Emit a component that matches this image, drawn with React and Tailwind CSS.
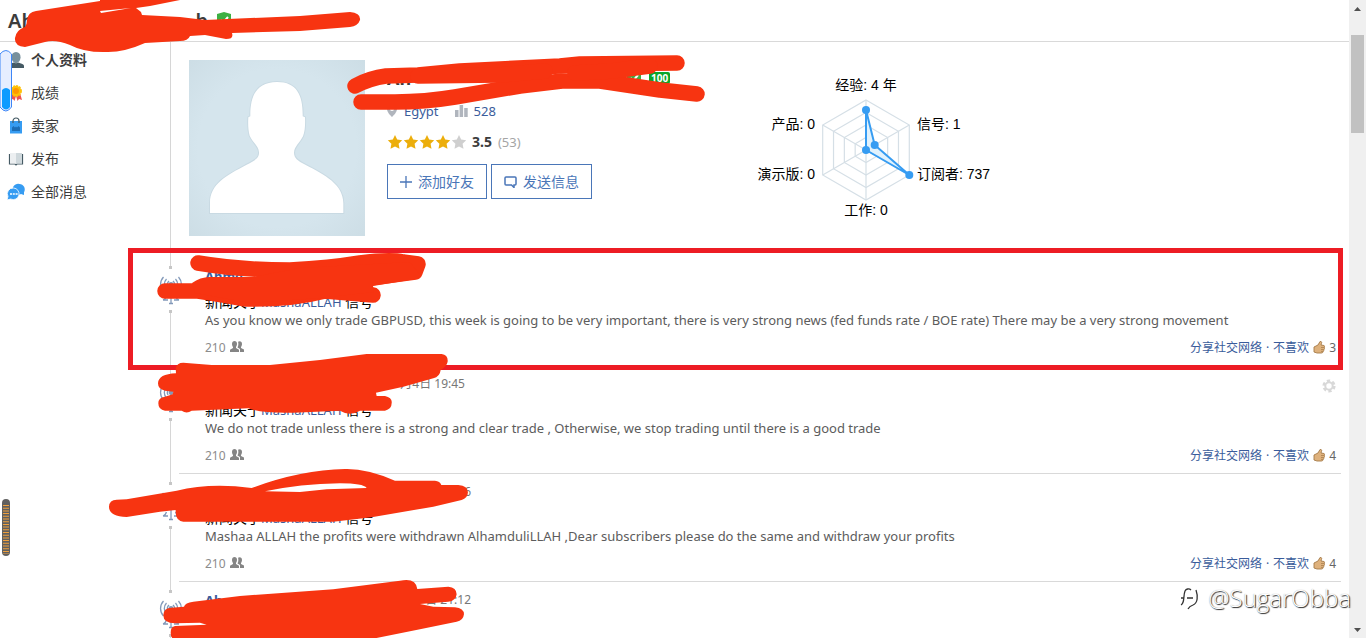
import clsx from "clsx";

const NAV = [
  { label: "个人资料", icon: UserIcon, active: true },
  { label: "成绩", icon: MedalIcon },
  { label: "卖家", icon: BagIcon },
  { label: "发布", icon: BookIcon },
  { label: "全部消息", icon: ChatIcon },
];

const POSTS = [
  {
    id: 1,
    name: "Ahme",
    text: "As you know we only trade GBPUSD, this week is going to be very important, there is very strong news (fed funds rate / BOE rate) There may be a very strong movement",
    likes: 3,
  },
  {
    id: 2,
    date: "月4日 19:45",
    dateClass: "pr-1.5",
    text: "We do not trade unless there is a strong and clear trade , Otherwise, we stop trading until there is a good trade",
    likes: 4,
    gear: true,
  },
  {
    id: 3,
    date: "6",
    text: "Mashaa ALLAH the profits were withdrawn AlhamduliLLAH ,Dear subscribers please do the same and withdraw your profits",
    likes: 4,
  },
  { id: 4, name: "Ah", date: "日 21:12" },
];

function UserIcon() {
  return (
    <svg width="18" height="18" viewBox="0 0 18 18">
      <path d="M9 1c3 0 4.500 2.200 4.500 5.200S11.500 12 9 12 4.500 9.200 4.500 6.200 6 1 9 1Z" fill="#78909c" />
      <path d="M1 17v-2c0-2 3-2.500 6-3.500 1 1 3 1 4 0 3 1 6 1.500 6 3.500v2Z" fill="#455a64" />
    </svg>
  );
}

function MedalIcon() {
  return (
    <svg width="18" height="18" viewBox="0 0 18 18">
      <path d="m5 9-2 7 3-1 1.500 2L9 12l1.500 5 1.500-2 3 1-2-7Z" fill="#ef5350" />
      <circle cx="9" cy="7" r="5.200" fill="#ffc107" stroke="#ffc107" strokeWidth="1.500" strokeDasharray="2 1" />
      <circle cx="9" cy="7" r="3" fill="#ff9800" />
    </svg>
  );
}

function BagIcon() {
  return (
    <svg width="18" height="18" viewBox="0 0 18 18">
      <path d="M3 4h12v12.500H3z" fill="#369cf2" />
      <path d="M6 6V4a3 3 0 0 1 6 0v2" fill="none" stroke="#455a64" strokeWidth="1.200" />
      <path d="M5 14v-3.500L6.500 9 8 10.500 9 9.500l1 1L11.500 9l1.500 1.500V14Z" fill="#1d6db5" />
    </svg>
  );
}

function BookIcon() {
  return (
    <svg width="18" height="18" viewBox="0 0 18 18">
      <path d="M2.500 4v10H8l1 1 1-1h5.500V4" fill="none" stroke="#455a64" strokeWidth="1.200" />
      <path d="M3 3h6v10.500H3z" fill="#eceff1" />
      <path d="M9 3h6v10.500H9z" fill="#cfd8dc" />
    </svg>
  );
}

function ChatIcon() {
  return (
    <svg width="18" height="18" viewBox="0 0 18 18">
      <path d="M12.500 1a5.500 5.500 0 0 1 4.500 8.300V12l-3-1A5.500 5.500 0 1 1 12.500 1Z" fill="#369cf2" />
      <path d="M6.500 5a5.800 5.800 0 1 1-2.800 11L0 17l1-3.500A5.800 5.800 0 0 1 6.500 5Z" fill="#369cf2" stroke="#fff" strokeWidth=".8" />
      <path d="M3 10.200h2v1.600H3zM5.800 10.200h2v1.600h-2zM8.600 10.200h2v1.600h-2z" fill="#fff" />
    </svg>
  );
}

function Shield() {
  return (
    <svg width="16" height="17" viewBox="0 0 16 17" className="shrink-0">
      <path d="m8 0 7 2v6c0 4-3 7-7 9-4-2-7-5-7-9V2Z" fill="#3cb043" />
      <path d="m4.500 8 2.500 3 5-6" fill="none" stroke="#fff" strokeWidth="2" />
    </svg>
  );
}

function Star({ on }) {
  return (
    <svg width="16" height="16" viewBox="0 0 16 16">
      <path d="m8 1 2.200 4.600 5 .7-3.600 3.500.9 5L8 12.400l-4.500 2.400.9-5L.8 6.300l5-.7Z" fill={on ? "#ecae0b" : "#cfcfcf"} />
    </svg>
  );
}

function Antenna() {
  return (
    <svg width="24" height="30" viewBox="0 0 24 30" fill="none" stroke="#8299b9" strokeWidth="1.300">
      <path d="M4.500 2a11 11 0 0 0 0 15M19.500 2a11 11 0 0 1 0 15M7.500 4a8 8 0 0 0 0 11M16.500 4a8 8 0 0 1 0 11M10 6a5 5 0 0 0-1 6M14 6a5 5 0 0 1 1 6" />
      <circle cx="12" cy="9.500" r="1.800" fill="#8299b9" />
      <path d="M12 11v18M4 25c2-1 3-2 3.500-4M20 25c-2-1-3-2-3.500-4M4 25h5M15 25h5M10 28.500h4" />
    </svg>
  );
}

function Avatar() {
  return (
    <svg width="176" height="176" viewBox="27 30 528 528" className="shrink-0" role="img" aria-label="avatar">
      <defs>
        <radialGradient id="sky" r="0.75">
          <stop offset="0.6" stopColor="#d5e5ed" />
          <stop offset="1" stopColor="#cbdce4" />
        </radialGradient>
      </defs>
      <path d="M27 30h528v528H27z" fill="url(#sky)" />
      <path
        d="M90 489v-30c0-58 50-83 110-115 30-15 38-22 37-37-1-20-18-28-28-50-5-18-5-38-4-55l6-3c-1-60 18-103 80-103s78 43 77 103l7 3c1 20 0 40-6 57-10 20-26 30-27 49 0 15 10 24 34 36 60 31 115 60 114 117v28Z"
        fill="#fff"
        stroke="#c9dae3"
        strokeWidth="6"
        paintOrder="stroke"
      />
    </svg>
  );
}

function Radar() {
  const rings = [1, 0.75, 0.5, 0.25];
  return (
    <svg width="102" height="107" viewBox="0 0 102 107" className="overflow-visible">
      <g transform="translate(51 56)" fill="none">
        {rings.map((k) => (
          <path key={k} transform={`scale(${k})`} vectorEffect="non-scaling-stroke" d="M0-50 43.300-25V25L0 50-43.300 25V-25Z" stroke="#d5dfe6" strokeWidth="1.200" />
        ))}
        <path d="M0-50V50M-43.300-25 43.300 25M-43.300 25 43.300-25" stroke="#d5dfe6" strokeWidth="1.200" />
        <path d="M0-40 8.700-5 43.300 25 0 0Z" fill="#e1f2fd" stroke="#369cf2" strokeWidth="2" />
        <g fill="#369cf2">
          <circle cy="-40" r="4" />
          <circle cx="8.700" cy="-5" r="4" />
          <circle cx="43.300" cy="25" r="4" />
          <circle r="4" />
        </g>
      </g>
    </svg>
  );
}

function RadarChart() {
  return (
    <div className="mt-4 grid grid-cols-[68px_102px_auto] text-sm leading-[18px] text-black whitespace-nowrap">
      <div className="col-start-2 text-center">经验: 4 年</div>
      <div className="col-start-1 flex flex-col items-end justify-center gap-8 pt-0.5">
        <span>产品: 0</span>
        <span>演示版: 0</span>
      </div>
      <Radar />
      <div className="flex flex-col justify-center gap-8 pt-0.5">
        <span>信号: 1</span>
        <span>订阅者: 737</span>
      </div>
      <div className="col-start-2 text-center">工作: 0</div>
    </div>
  );
}

function ProfileInfo() {
  return (
    <div className="ml-[22px] w-[360px] shrink-0">
      <div className="flex h-9 items-center">
        <h2 className="w-[239px] text-lg leading-9 font-bold text-[#3c3c3c]">Ah</h2>
        <Shield />
        <span className="ml-[7px] rounded-xs bg-[#0ba52b] px-0.5 text-[10px] leading-3 font-bold text-white">100</span>
      </div>
      <div className="flex h-[30px] items-center text-sm text-[#3a5c9b]">
        <svg width="10" height="14" viewBox="0 0 10 14">
          <path fillRule="evenodd" d="M5 0a5 5 0 0 1 5 5c0 3-3 6-5 8-2-2-5-5-5-8a5 5 0 0 1 5-5Zm0 3a2 2 0 1 0 0 4 2 2 0 0 0 0-4Z" fill="#b0b5bd" />
        </svg>
        <a href="#egypt" className="ml-[7px] text-[13px]">Egypt</a>
        <svg width="13" height="12" viewBox="0 0 13 12" className="ml-4" fill="#b0b5bd">
          <path d="M0 5h3.500v7H0zM4.600 0h3.500v12H4.600zM9.200 3h3.500v9H9.200z" />
        </svg>
        <a href="#rating" className="ml-1.5 text-[13px]">528</a>
      </div>
      <div className="flex h-8 items-center text-sm">
        {[1, 2, 3, 4, 5].map((n) => (
          <Star key={n} on={n < 5} />
        ))}
        <b className="ml-[5px] text-[#3c3c3c]">3.5</b>
        <span className="ml-1.5 text-[13px] text-[#a5a5a5]">(53)</span>
      </div>
      <div className="mt-1.5 flex gap-1 text-sm text-[#4a76b8]">
        <button type="button" className="flex h-[35px] items-center gap-1.5 border border-[#4a76b8] px-3 leading-none">
          <svg width="12" height="12" viewBox="0 0 12 12" stroke="#4a76b8" strokeWidth="1.300">
            <path d="M6 0v12M0 6h12" />
          </svg>
          添加好友
        </button>
        <button type="button" className="flex h-[35px] items-center gap-1.5 border border-[#4a76b8] px-3 leading-none">
          <svg width="13" height="12" viewBox="0 0 13 12" fill="none" stroke="#4a76b8" strokeWidth="1.500">
            <path d="M2 1h9q1 0 1 1v6q0 1-1 1h-1v2.500L7.500 9H2Q1 9 1 8V2q0-1 1-1Z" />
          </svg>
          发送信息
        </button>
      </div>
    </div>
  );
}

function Timeline() {
  return (
    <div className="flex w-[31px] shrink-0 flex-col items-center">
      <span className="h-2 w-px bg-[#d6d6d6]" />
      <span className="size-[3px] bg-[#c6c6c6]" />
      <span className="flex h-[41px] items-center">
        <Antenna />
      </span>
      <span className="size-[3px] bg-[#c6c6c6]" />
      <span className="w-px flex-1 bg-[#d6d6d6]" />
    </div>
  );
}

function PostBody({ post }) {
  return (
    <>
      <div className="mt-2 h-[18px] text-sm leading-[18px] text-black">
        新闻关于<a href="#signal" className="text-[13px] text-[#3a5c9b]">MashaALLAH</a> 信号
      </div>
      <p className="h-[18px] text-[13px] leading-[18px] text-[#5c5c5c]">{post.text}</p>
      <div className="mt-2.5 flex h-[18px] items-center text-xs text-[#3a5c9b]">
        <span className="text-[#8c8c8c]">210</span>
        <svg width="14" height="11" viewBox="0 0 14 11" className="mb-1 ml-1" fill="#858585">
          <path d="M4.500 0C6 0 7 1 7 2.800S6.300 5.500 6 6v1l3 1.800V11H0V8.800L3 7V6C2.600 5.500 2 4.500 2 2.800S3 0 4.500 0Z" />
          <path d="M8 .8C10-.5 12 .5 12 3c0 1.500-.6 2.300-1 3v1l3 1.500V11h-4V8L7.500 6.400C8.500 4.500 8.600 2.500 8 .8Z" />
        </svg>
        <a href="#share" className="ml-auto">分享社交网络</a>
        <span className="mx-1">·</span>
        <a href="#unlike">不喜欢</a>
        <svg width="12" height="13" viewBox="0 0 12 13" className="mb-0.5 ml-1">
          <path d="M1 6 5 4l2-3.500c1.500-.3 2 .6 1.500 2L8 4l3 .5c1 .5.8 1.500.4 2 .4.600.2 1.500-.4 2 .2.900-.2 1.500-.8 1.800 0 1-.7 1.700-2 1.700H4L1 11Z" fill="#deb17c" stroke="#a57a48" strokeWidth=".9" />
          <path d="M8 6.500h3M8 8.500h2.700M8 10.400h2" stroke="#a57a48" strokeWidth=".7" />
        </svg>
        <span className="ml-1 text-[#666]">{post.likes}</span>
      </div>
    </>
  );
}

function Post({ post }) {
  return (
    <article className="flex min-h-[108px]">
      <Timeline />
      <div className="-ml-[7px] flex-1 border-b border-[#d9d9d9] pt-[9px] pr-[5px] pb-2 pl-[26px]">
        <div className="flex h-[18px] items-center justify-between text-xs leading-[18px] text-[#777]">
          <div className={clsx("flex w-[266px] justify-between", post.dateClass)}>
            <a href="#author" className="text-[13px] font-bold text-[#3a5c9b]">{post.name}</a>
            <span>{post.date}</span>
          </div>
          {post.gear && (
            <button type="button" aria-label="设置" className="mt-1">
              <svg width="14" height="14" viewBox="0 0 14 14" fill="none" stroke="#d8d8d8">
                <circle cx="7" cy="7" r="5.300" strokeWidth="2.600" strokeDasharray="3.200 2.350" />
                <circle cx="7" cy="7" r="3.700" strokeWidth="2" />
              </svg>
            </button>
          )}
        </div>
        {post.text && <PostBody post={post} />}
      </div>
    </article>
  );
}

// red marker strokes over the names
function Marker() {
  return (
    <svg width="720" height="638" viewBox="0 0 720 638" fill="#f73411" className="pointer-events-none absolute top-0 left-0">
      <path d="M27 20Q28 12 36 11L100 1V-4H190L180 0 150 6 136 8 141 12 142 15 180 17 205 20 300 16 350 12Q361 13 360 20 358 26 350 27L300 31 232 33Q234 39 226 39L205 35 190 36Q188 41 180 41L145 43Q125 52 108 52 85 53 70 45 55 39 45 42L25 47Q14 46 15 38 16 30 25 27 27 24 27 20Z" />
      <path d="M100 11 131 8 101 13Z" fill="#fff" />
      <g fill="none" stroke="#f73411" strokeWidth="15.500" strokeLinecap="round" strokeLinejoin="round">
        <path d="M355 86Q370 78 386 76L418 75 460 71 560 66 580 64 677 63" />
        <path d="M361 102H395Q425 102 455 97L520 86 562 81H600L660 90 697 94" />
        <path d="M418 76 500 75 545 71M575 73 612 71 650 66" />
        <path d="M198 263Q240 270 290 270 330 268 360 263 390 259 403 262L418 264 415 272 370 278" />
        <path d="M165 291H198Q225 295 245 299 290 300 325 291L373 295" />
      </g>
      <path d="M192 283Q200 277 210 277L252 277 300 268 410 262 420 275 416 279 373 286 374 292 320 298 250 303 195 293Z" />
      <g transform="translate(120 240) scale(.3333)">
        <path d="M167 385Q170 368 190 368L275 375H450L600 360 740 342H965Q985 345 983 365 980 380 962 390 960 410 940 415L850 440 768 458 770 468H795Q818 473 815 490 815 508 795 512H720Q690 530 660 512L520 518Q420 520 385 505L215 512Q200 523 185 512H135Q115 510 115 490 115 472 135 470L158 463 160 455 135 452Q114 448 114 430 115 402 168 400Z" />
      </g>
      <g transform="translate(100 460) scale(.3333)">
        <path
          fillRule="evenodd"
          d="M27 140Q28 119 50 119L80 118 230 92Q330 68 455 84 600 30 735 27 800 25 885 62H1005Q1020 63 1024 75H1075Q1104 77 1104 97 1103 115 1085 120L1000 140 815 172 700 185H250Q225 182 227 150L180 155 80 171Q27 170 27 140ZM495 94Q600 72 720 70 790 70 800 84L680 88 600 96Z"
        />
        <path d="M252 440Q255 428 280 425L420 408 700 388 900 362Q948 352 952 387L1045 380Q1070 382 1070 403 1068 423 1045 425L960 432 1000 440 1065 442Q1092 445 1092 463 1090 482 1070 485L960 508 800 540H225Q212 535 212 518 212 500 225 498L320 494 300 488 225 490Q190 490 190 466 190 444 215 443Z" />
      </g>
    </svg>
  );
}

function ScrollBar() {
  return (
    <div className="flex w-[17px] shrink-0 flex-col items-center bg-[#f0f0f0]">
      <svg width="17" height="17" viewBox="0 0 17 17">
        <path d="M5 11h7L8.500 7Z" fill="#505050" />
      </svg>
      <span className="mt-[18px] h-[98px] w-[13px] bg-[#c1c1c1]" />
      <svg width="17" height="17" viewBox="0 0 17 17" className="mt-auto">
        <path d="M5 7h7l-3.500 4Z" fill="#505050" />
      </svg>
    </div>
  );
}

export default function App() {
  return (
    <div className="relative flex h-screen overflow-hidden bg-white font-['Noto_Sans','Noto_Sans_CJK_SC',sans-serif]">
      <div className="min-w-0 flex-1">
        <header className="flex h-[42px] items-center border-b border-[#d9d9d9] pl-2">
          <h1 className="flex w-[200px] justify-between text-xl font-semibold text-[#3c3c3c]">
            <span>Ah</span>
            <span>b</span>
          </h1>
          <span className="ml-2">
            <Shield />
          </span>
        </header>

        <div className="flex">
          <nav className="w-[155px] shrink-0 pt-px">
            {NAV.map(({ label, icon: Icon, active }) => (
              <a
                key={label}
                href="#nav"
                className={clsx("flex h-[33px] items-center gap-1.5 pl-[7px] text-sm text-[#3c3c3c]", active && "font-bold")}
              >
                <Icon />
                {label}
              </a>
            ))}
          </nav>

          <main className="mr-2 min-w-0 flex-1">
            <section className="flex h-[216px]">
              <div className="flex w-[31px] shrink-0 justify-center">
                <span className="w-px bg-[#d6d6d6]" />
              </div>
              <div className="flex items-start pt-[18px] pl-[3px]">
                <Avatar />
                <ProfileInfo />
                <div className="font-['Liberation_Sans','Noto_Sans_CJK_SC',sans-serif]">
                  <RadarChart />
                </div>
              </div>
            </section>
            {POSTS.map((post) => (
              <Post key={post.id} post={post} />
            ))}
          </main>
        </div>
      </div>
      <ScrollBar />

      <div className="pointer-events-none absolute top-[248px] right-[23px] left-[128px] h-[122px] border-[5px] border-[#ed1c24]" />
      <Marker />

      {/* edge gauges */}
      <svg width="12" height="62" viewBox="0 0 12 62" className="absolute top-[50px] left-0">
        <path d="M0 4Q6-3 11.500 4V57Q6 65 0 57Z" fill="#e6eeff" stroke="#3d86f7" />
        <path d="M2 40q4-4 8 0v17q-4 5-8 0Z" fill="#0d9bff" />
      </svg>
      <svg width="12" height="60" viewBox="0 0 12 60" className="absolute top-[498px] left-0">
        <rect x="2" y="1" width="8" height="57" rx="4" fill="#606060" />
        <path d="M6 7v49" stroke="#f0a03c" strokeWidth="6" strokeDasharray="1 1.700" />
      </svg>

      <div className="absolute right-[15px] bottom-6 flex items-center gap-2 font-['Open_Sans',sans-serif] text-2xl leading-8 font-light text-white [text-shadow:1px_1px_1px_#222,0_0_1px_#999]">
        <svg width="22" height="26" viewBox="0 0 22 26" fill="none" stroke="#333" strokeWidth="1.300">
          <path d="M3 20c4-2 2-9 4-14 1-2 4-3 6-1M3 13h3M9 13h6M18 5c2 6 2 13-3 15-3 1-4 2-5 4" />
        </svg>
        @SugarObba
      </div>
    </div>
  );
}
